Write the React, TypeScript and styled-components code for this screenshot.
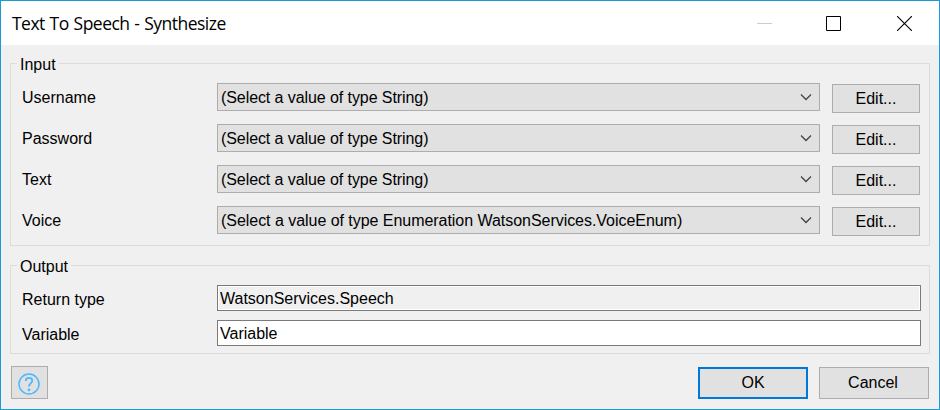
import React from "react";
import styled, { createGlobalStyle } from "styled-components";

const GlobalStyle = createGlobalStyle`
  * { box-sizing: border-box; }
  body { margin: 0; }
  body, button, input {
    font-family: "Liberation Sans", Arial, sans-serif;
    font-size: 16px;
    color: #000;
  }
`;

const Dialog = styled.div`
  width: 940px;
  height: 410px;
  display: flex;
  flex-direction: column;
  background: #f0f0f0;
  border: 1px solid #1b9ada;
  overflow: hidden;
`;

const TitleBar = styled.header`
  flex: none;
  height: 44px;
  display: flex;
  align-items: center;
  justify-content: space-between;
  padding: 0 0 0 11px;
  background: #fff;
`;

const Title = styled.h1`
  margin: 0;
  font-family: "Open Sans", "Noto Sans", sans-serif;
  font-size: 17.5px;
  font-weight: 400;
  line-height: 24px;
  letter-spacing: -0.52px;
  word-spacing: 0.8px;
  white-space: pre;
`;

const WindowControls = styled.div`
  display: flex;
  height: 44px;
`;

const WindowButton = styled.button<{ $inset?: number }>`
  width: 70px;
  padding: 0 ${(p) => p.$inset ?? 0}px 0 0;
  border: 0;
  background: none;
  display: flex;
  align-items: center;
  justify-content: center;
`;

const Content = styled.main`
  padding: 9px 10px 0 9px;
  display: flex;
  flex-direction: column;
`;

const Group = styled.fieldset<{ $height: number; $gap: number }>`
  width: 920px;
  height: ${(p) => p.$height}px;
  min-width: 0;
  margin: 0 0 10px;
  padding: 10px 0 0 11px;
  border: 1px solid #dcdcdc;
  display: flex;
  flex-direction: column;
  gap: ${(p) => p.$gap}px;
`;

const Legend = styled.legend`
  margin-left: -5px;
  padding: 1px 3px 0;
  height: 19px;
  line-height: 20px;
`;

const Row = styled.div`
  display: flex;
  align-items: flex-start;
`;

const Label = styled.label`
  flex: none;
  width: 195px;
  line-height: 18px;
  padding-top: 6px;
`;

const Select = styled.div`
  width: 603px;
  height: 28px;
  display: flex;
  align-items: center;
  justify-content: space-between;
  padding: 0 7px 0 3px;
  border: 1px solid #adadad;
  background: #e1e1e1;
`;

const SelectText = styled.span<{ $tracking: number }>`
  line-height: 18px;
  padding-top: 2px;
  letter-spacing: ${(p) => p.$tracking}px;
`;

const Button = styled.button<{ $width: number; $height: number; $primary?: boolean }>`
  width: ${(p) => p.$width}px;
  height: ${(p) => p.$height}px;
  flex: none;
  display: flex;
  align-items: center;
  justify-content: center;
  padding: 0;
  border: ${(p) => (p.$primary ? "2px solid #0078d7" : "1px solid #adadad")};
  border-radius: 0;
  background: #e1e1e1;
`;

const EditButton = styled(Button)`
  margin: 1px 0 0 12px;
`;

const HelpButton = styled(Button)`
  padding: 3px 1px 0 0;
`;

const CancelButton = styled(Button)`
  padding-right: 2px;
`;

const Field = styled.input`
  width: 704px;
  height: 26px;
  padding: 2px 2px 0;
  border: 1px solid #7a7a7a;
  border-radius: 0;
  outline: none;
  background: #fff;
  &:read-only {
    background: #f0f0f0;
    box-shadow: inset 0 0 0 1px #fff;
  }
`;

const Footer = styled.footer`
  display: flex;
  align-items: flex-start;
  padding: 2px 0 0 1px;
`;

const Actions = styled.div`
  display: flex;
  gap: 11px;
  margin: 1px 0 0 650px;
`;

const Chevron = () => (
  <svg width="12" height="8" viewBox="0 0 12 8" fill="none">
    <path d="M1 1.5 6 6.5 11 1.5" stroke="#444" strokeWidth="1.3" />
  </svg>
);

const HelpIcon = () => (
  <svg width="22" height="22" viewBox="0 0 22 22" fill="none" stroke="#4db8ff">
    <circle cx="11" cy="11" r="10" strokeWidth="1.5" />
    <path d="M7.8 7.9C7.8 5.9 9.2 4.9 11 4.9s3.3 1 3.3 2.8c0 2.3-3.3 2.7-3.3 5.9" strokeWidth="1.8" />
    <circle cx="11" cy="16.9" r="1.4" fill="#4db8ff" stroke="none" />
  </svg>
);

const inputs = [
  { label: "Username", value: "(Select a value of type String)", tracking: -0.08 },
  { label: "Password", value: "(Select a value of type String)", tracking: -0.08 },
  { label: "Text", value: "(Select a value of type String)", tracking: -0.08 },
  {
    label: "Voice",
    value: "(Select a value of type Enumeration WatsonServices.VoiceEnum)",
    tracking: -0.04,
  },
];

export default function App() {
  return (
    <>
      <GlobalStyle />
      <Dialog>
        <TitleBar>
          <Title>Text To Speech - Synthesize</Title>
          <WindowControls>
            <WindowButton aria-label="Minimize">
              <svg width="15" height="15"><path d="M0 7.5h15" stroke="#ccc" /></svg>
            </WindowButton>
            <WindowButton $inset={2} aria-label="Maximize">
              <svg width="15" height="15"><path d="M.5.5h14v14H.5z" fill="none" stroke="#000" /></svg>
            </WindowButton>
            <WindowButton aria-label="Close">
              <svg width="15" height="15"><path d="M0 0 15 15M15 0 0 15" stroke="#000" strokeWidth="1.1" /></svg>
            </WindowButton>
          </WindowControls>
        </TitleBar>
        <Content>
          <Group $height={192} $gap={11}>
            <Legend>Input</Legend>
            {inputs.map(({ label, value, tracking }) => (
              <Row key={label}>
                <Label>{label}</Label>
                <Select>
                  <SelectText $tracking={tracking}>{value}</SelectText>
                  <Chevron />
                </Select>
                <EditButton $width={88} $height={29}>Edit...</EditButton>
              </Row>
            ))}
          </Group>
          <Group $height={98} $gap={9}>
            <Legend>Output</Legend>
            <Row>
              <Label>Return type</Label>
              <Field readOnly value="WatsonServices.Speech" />
            </Row>
            <Row>
              <Label>Variable</Label>
              <Field defaultValue="Variable" />
            </Row>
          </Group>
          <Footer>
            <HelpButton $width={37} $height={33} aria-label="Help"><HelpIcon /></HelpButton>
            <Actions>
              <Button $width={110} $height={32} $primary>OK</Button>
              <CancelButton $width={110} $height={32}>Cancel</CancelButton>
            </Actions>
          </Footer>
        </Content>
      </Dialog>
    </>
  );
}
